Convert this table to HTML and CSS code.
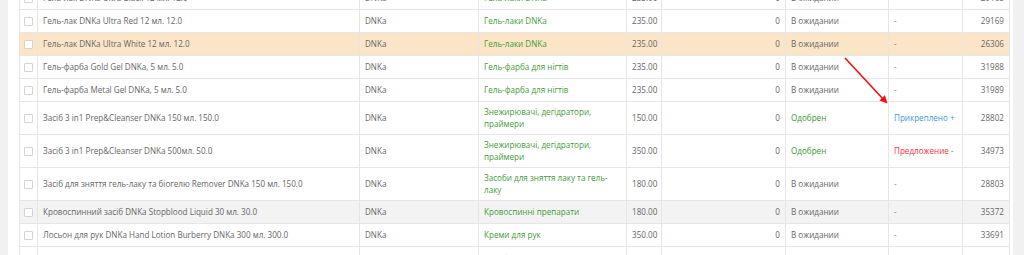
FILE: index.html
```html
<!DOCTYPE html>
<html lang="uk">
<head>
<meta charset="utf-8">
<title>Товари</title>
<link rel="stylesheet" href="styles.css">
</head>
<body>
<div class="panel">
  <table class="grid">
    <colgroup>
      <col class="c-check"><col class="c-name"><col class="c-brand"><col class="c-cat"><col class="c-price"><col class="c-qty"><col class="c-status"><col class="c-link"><col class="c-id">
    </colgroup>
    <tbody>
      <tr><td class="chk"><span class="box"></span></td><td>Гель-лак DNKa Ultra Black 12 мл. 12.0</td><td>DNKa</td><td class="cat">Гель-лаки DNKa</td><td class="num">235.00</td><td class="num">0</td><td>В ожидании</td><td class="dash">-</td><td class="num">29168</td></tr>
      <tr><td class="chk"><span class="box"></span></td><td>Гель-лак DNKa Ultra Red 12 мл. 12.0</td><td>DNKa</td><td class="cat">Гель-лаки DNKa</td><td class="num">235.00</td><td class="num">0</td><td>В ожидании</td><td class="dash">-</td><td class="num">29169</td></tr>
      <tr class="hl"><td class="chk"><span class="box"></span></td><td>Гель-лак DNKa Ultra White 12 мл. 12.0</td><td>DNKa</td><td class="cat">Гель-лаки DNKa</td><td class="num">235.00</td><td class="num">0</td><td>В ожидании</td><td class="dash">-</td><td class="num">26306</td></tr>
      <tr><td class="chk"><span class="box"></span></td><td>Гель-фарба Gold Gel DNKa, 5 мл. 5.0</td><td>DNKa</td><td class="cat">Гель-фарба для нігтів</td><td class="num">235.00</td><td class="num">0</td><td>В ожидании</td><td class="dash">-</td><td class="num">31988</td></tr>
      <tr><td class="chk"><span class="box"></span></td><td>Гель-фарба Metal Gel DNKa, 5 мл. 5.0</td><td>DNKa</td><td class="cat">Гель-фарба для нігтів</td><td class="num">235.00</td><td class="num">0</td><td>В ожидании</td><td class="dash">-</td><td class="num">31989</td></tr>
      <tr><td class="chk"><span class="box"></span></td><td>Засіб 3 in1 Prep&amp;Cleanser DNKa 150 мл. 150.0</td><td>DNKa</td><td class="cat">Знежирювачі, дегідратори,<br>праймери</td><td class="num">150.00</td><td class="num">0</td><td class="ok">Одобрен</td><td class="att">Прикреплено +</td><td class="num">28802</td></tr>
      <tr><td class="chk"><span class="box"></span></td><td>Засіб 3 in1 Prep&amp;Cleanser DNKa 500мл. 50.0</td><td>DNKa</td><td class="cat">Знежирювачі, дегідратори,<br>праймери</td><td class="num">350.00</td><td class="num">0</td><td class="ok">Одобрен</td><td class="offer">Предложение -</td><td class="num">34973</td></tr>
      <tr><td class="chk"><span class="box"></span></td><td>Засіб для зняття гель-лаку та біогелю Remover DNKa 150 мл. 150.0</td><td>DNKa</td><td class="cat">Засоби для зняття лаку та гель-<br>лаку</td><td class="num">180.00</td><td class="num">0</td><td>В ожидании</td><td class="dash">-</td><td class="num">28803</td></tr>
      <tr class="hover"><td class="chk"><span class="box"></span></td><td>Кровоспинний засіб DNKa Stopblood Liquid 30 мл. 30.0</td><td>DNKa</td><td class="cat">Кровоспинні препарати</td><td class="num">180.00</td><td class="num">0</td><td>В ожидании</td><td class="dash">-</td><td class="num">35372</td></tr>
      <tr><td class="chk"><span class="box"></span></td><td>Лосьон для рук DNKa Hand Lotion Burberry DNKa 300 мл. 300.0</td><td>DNKa</td><td class="cat">Креми для рук</td><td class="num">350.00</td><td class="num">0</td><td>В ожидании</td><td class="dash">-</td><td class="num">33691</td></tr>
      <tr class="tall"><td class="chk"><span class="box"></span></td><td>Масло для кутикули DNKa Cuticle Oil 15 мл. 15.0</td><td>DNKa</td><td class="cat">Засоби для догляду за<br>кутикулою та<br>нігтями</td><td class="num">120.00</td><td class="num">0</td><td>В ожидании</td><td class="dash">-</td><td class="num">33692</td></tr>
    </tbody>
  </table>
</div>
<svg class="arrow" width="1024" height="255" viewBox="0 0 1024 255" aria-hidden="true">
  <line x1="845" y1="58" x2="884" y2="100" stroke="#f01010" stroke-width="1.6"/>
  <polygon points="887.5,103.5 879.4,100.4 884.9,95.3" fill="#f01010"/>
</svg>
</body>
</html>
```
FILE: styles.css
```css
html, body {
  margin: 0;
  padding: 0;
  height: 255px;
  overflow: hidden;
}
body {
  background: #f1f1f1;
  font-family: "Open Sans", "Noto Sans", sans-serif;
  font-size: 8.1px;
  color: #666;
  position: relative;
}
.panel {
  margin: -14px 11px 0 8px;
  padding: 0 4px 0 11px;
  background: #fff;
  min-height: 300px;
}
.grid {
  width: 990px;
  table-layout: fixed;
  border-collapse: collapse;
}
.c-check { width: 18px; }
.c-name { width: 322px; }
.c-brand { width: 119px; }
.c-cat { width: 148px; }
.c-price { width: 35px; }
.c-qty { width: 124px; }
.c-status { width: 103px; }
.c-link { width: 74px; }
.c-id { width: 47px; }
.grid tr { height: 23px; }
.grid tr.tall td.cat { padding-top: 6px; }
.grid td {
  border: 1px solid #e6e6e6;
  padding: 4px 5px;
  line-height: 12px;
  vertical-align: middle;
  white-space: nowrap;
  overflow: hidden;
}
.grid td.cat {
  color: #3f9c38;
  white-space: normal;
}
.grid td.num { text-align: right; }
.grid td.dash { color: #888; }
.grid td.ok { color: #3a9433; }
.grid td.att { color: #3c9bd8; }
.grid td.offer { color: #f5333a; }
.grid td.chk {
  padding: 0;
  text-align: center;
}
.box {
  display: inline-block;
  width: 7px;
  height: 7px;
  border: 1px solid #d4d4d4;
  border-radius: 1px;
  background: #fff;
  vertical-align: middle;
}
.grid tr.hl td { background: #fce5c7; }
.grid tr.hover td { background: #f3f3f3; }
.arrow {
  position: absolute;
  left: 0;
  top: 0;
  pointer-events: none;
}
```
